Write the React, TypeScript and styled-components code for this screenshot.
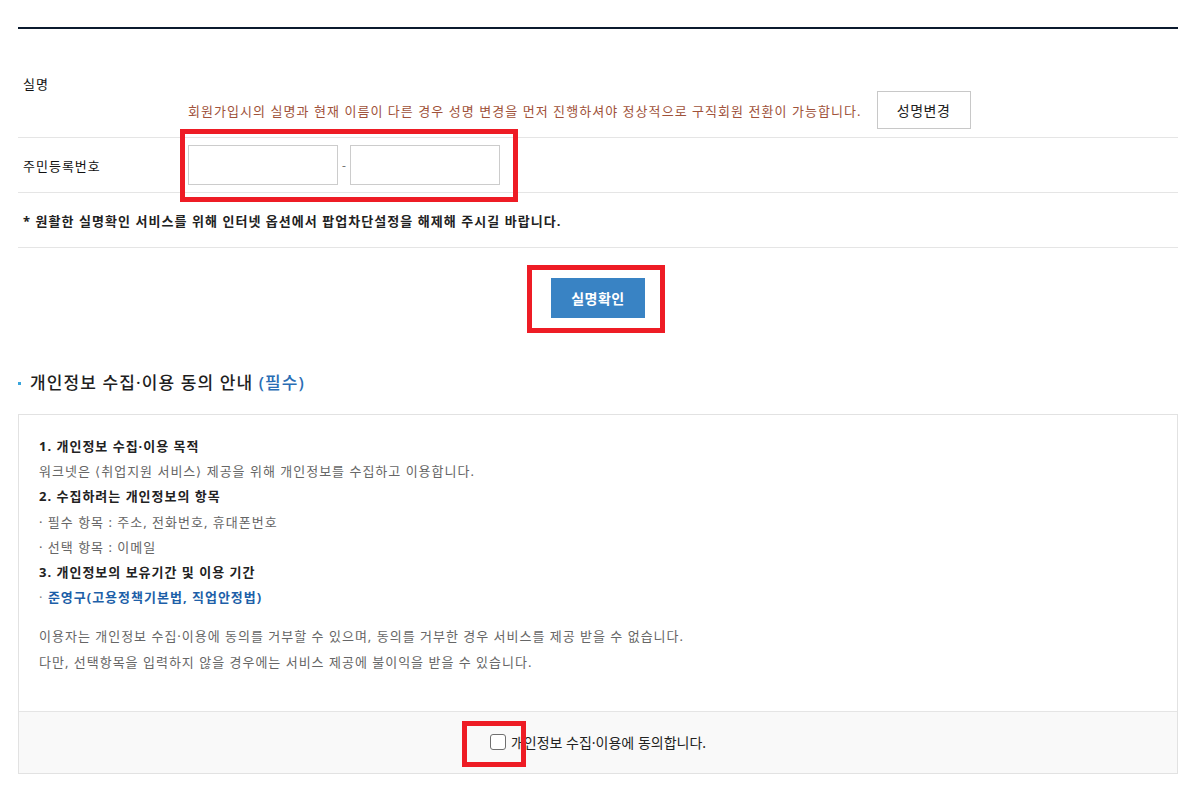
import React from "react";
import styled, { createGlobalStyle } from "styled-components";

const GlobalStyle = createGlobalStyle`
  html, body { margin: 0; padding: 0; background: #fff; }
  body { font-family: "Noto Sans", "Noto Sans CJK KR", sans-serif; color: #222; }
  * { box-sizing: border-box; }
`;

const Page = styled.div`
  position: relative;
  width: 1192px;
  min-height: 786px;
  padding: 27px 14px 0 18px;
`;

const Table = styled.div`
  border-top: 2px solid #0b1a2e;
`;

const Row = styled.div`
  display: grid;
  grid-template-columns: 170px 990px;
  border-bottom: 1px solid #e5e5e5;
`;

const Label = styled.div`
  align-self: center;
  padding-left: 5px;
  font-size: 13px;
  letter-spacing: 1px;
  color: #111;
`;

const Cell = styled.div<{ $pt: number; $pb: number }>`
  display: flex;
  justify-content: flex-start;
  align-items: center;
  gap: 15px;
  padding: ${(p) => p.$pt}px 0 ${(p) => p.$pb}px;
`;

const Desc = styled.span`
  font-size: 13px;
  letter-spacing: 1.05px;
  color: #a0523a;
  white-space: nowrap;
`;

const OutlineButton = styled.button`
  flex: none;
  width: 94px;
  height: 38px;
  border: 1px solid #c8c8c8;
  background: #fff;
  font-family: inherit;
  font-size: 14px;
  letter-spacing: 0.5px;
  color: #222;
  padding: 0;
`;

const InputGroup = styled.div`
  display: flex;
  align-items: center;
  gap: 4px;
`;

const TextInput = styled.input`
  width: 150px;
  height: 40px;
  border: 1px solid #cccccc;
  background: #fff;
  padding: 0 8px;
  font-family: inherit;
`;

const Dash = styled.span`
  font-size: 12px;
  color: #777;
  width: 4px;
`;

const NoteRow = styled.div`
  display: flex;
  align-items: center;
  height: 55px;
  padding-left: 5px;
  border-bottom: 1px solid #e5e5e5;
  font-size: 13px;
  font-weight: 700;
  letter-spacing: 1.05px;
  color: #222;
`;

const ButtonArea = styled.div`
  display: flex;
  justify-content: center;
  padding-top: 30px;
`;

const PrimaryButton = styled.button`
  width: 94px;
  height: 40px;
  border: none;
  background: #3983c4;
  color: #fff;
  font-family: inherit;
  font-size: 14px;
  font-weight: 700;
  letter-spacing: 0.5px;
  padding: 0;
`;

const Heading = styled.h3`
  display: flex;
  align-items: center;
  gap: 9px;
  margin: 53px 0 19px;
  font-size: 17px;
  font-weight: 500;
  line-height: 24px;
  letter-spacing: 1.1px;
  color: #1f1f1f;
`;

const Bullet = styled.span`
  width: 3px;
  height: 3px;
  background: #39a5dc;
`;

const Required = styled.span`
  color: #2a6db4;
`;

const Box = styled.div`
  border: 1px solid #e2e2e2;
`;

const BoxBody = styled.div`
  padding: 19px 20px 36px;
  font-size: 13px;
  line-height: 25.2px;
  letter-spacing: 1px;
  color: #666;
`;

const Line = styled.div<{ $kind?: "title" | "link" }>`
  color: ${(p) => (p.$kind === "title" ? "#222" : p.$kind === "link" ? "#1d5fa8" : "#666")};
  font-weight: ${(p) => (p.$kind ? 700 : 400)};
`;

const Dot = styled.span`
  color: #888;
  font-weight: 400;
`;

const Paragraph = styled.div`
  margin-top: 14px;
`;

const BoxFooter = styled.div`
  display: flex;
  justify-content: center;
  align-items: center;
  gap: 5px;
  height: 62px;
  border-top: 1px solid #e5e5e5;
  background: #f9f9f9;
  font-size: 14px;
  color: #222;
`;

const Check = styled.input`
  appearance: none;
  width: 16px;
  height: 16px;
  margin: 0;
  border: 1px solid #707070;
  border-radius: 3px;
  background: #fff;
`;

const Highlight = styled.div<{ $x: number; $y: number; $w: number; $h: number }>`
  position: absolute;
  left: ${(p) => p.$x}px;
  top: ${(p) => p.$y}px;
  width: ${(p) => p.$w}px;
  height: ${(p) => p.$h}px;
  border: 5px solid #ee1c25;
  pointer-events: none;
`;

export default function App() {
  return (
    <Page>
      <GlobalStyle />
      <Table>
        <Row>
          <Label>실명</Label>
          <Cell $pt={62} $pb={8}>
            <Desc>
              회원가입시의 실명과 현재 이름이 다른 경우 성명 변경을 먼저 진행하셔야 정상적으로 구직회원 전환이 가능합니다.
            </Desc>
            <OutlineButton>성명변경</OutlineButton>
          </Cell>
        </Row>
        <Row>
          <Label>주민등록번호</Label>
          <Cell $pt={7} $pb={7}>
            <InputGroup>
              <TextInput />
              <Dash>-</Dash>
              <TextInput />
            </InputGroup>
          </Cell>
        </Row>
        <NoteRow>* 원활한 실명확인 서비스를 위해 인터넷 옵션에서 팝업차단설정을 해제해 주시길 바랍니다.</NoteRow>
      </Table>

      <ButtonArea>
        <PrimaryButton>실명확인</PrimaryButton>
      </ButtonArea>

      <Heading>
        <Bullet />
        <span>
          개인정보 수집·이용 동의 안내 <Required>(필수)</Required>
        </span>
      </Heading>

      <Box>
        <BoxBody>
          <Line $kind="title">1. 개인정보 수집·이용 목적</Line>
          <Line>워크넷은 ⟨취업지원 서비스⟩ 제공을 위해 개인정보를 수집하고 이용합니다.</Line>
          <Line $kind="title">2. 수집하려는 개인정보의 항목</Line>
          <Line>· 필수 항목 : 주소, 전화번호, 휴대폰번호</Line>
          <Line>· 선택 항목 : 이메일</Line>
          <Line $kind="title">3. 개인정보의 보유기간 및 이용 기간</Line>
          <Line $kind="link">
            <Dot>· </Dot>준영구(고용정책기본법, 직업안정법)
          </Line>
          <Paragraph>
            <Line>이용자는 개인정보 수집·이용에 동의를 거부할 수 있으며, 동의를 거부한 경우 서비스를 제공 받을 수 없습니다.</Line>
            <Line>다만, 선택항목을 입력하지 않을 경우에는 서비스 제공에 불이익을 받을 수 있습니다.</Line>
          </Paragraph>
        </BoxBody>
        <BoxFooter>
          <Check type="checkbox" />
          <span>개인정보 수집·이용에 동의합니다.</span>
        </BoxFooter>
      </Box>

      <Highlight $x={180} $y={129} $w={338} $h={73} />
      <Highlight $x={527} $y={265} $w={138} $h={68} />
      <Highlight $x={462} $y={721} $w={64} $h={46} />
    </Page>
  );
}
